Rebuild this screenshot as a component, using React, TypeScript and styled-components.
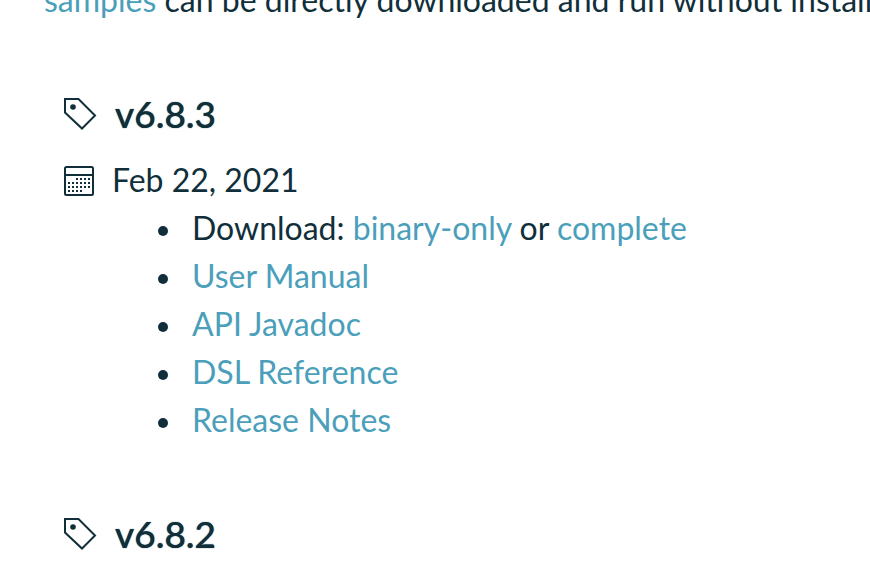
import React from "react";
import styled, { createGlobalStyle } from "styled-components";

const Global = createGlobalStyle`
  * { box-sizing: border-box; }
  body {
    margin: 0;
    overflow: hidden;
    background: #ffffff;
    color: #102f3a;
    font-family: Lato, sans-serif;
    font-size: 32px;
    line-height: 48px;
  }
`;

const Page = styled.main`
  padding-left: 44px;
`;

const Intro = styled.p`
  margin: -24px 0 0;
  white-space: nowrap;
`;

const Link = styled.a`
  color: #4b9fba;
  text-decoration: none;
`;

const Release = styled.section`
  padding: 66px 0 0 20px;
`;

const Version = styled.h2`
  display: flex;
  align-items: center;
  gap: 18px;
  margin: 0;
  font-size: 37px;
  font-weight: 500;
  line-height: 48px;
  text-shadow: 0 0 1px currentColor;
`;

const ReleaseDate = styled.div`
  display: flex;
  align-items: center;
  gap: 18px;
  margin-top: 18px;
`;

const Links = styled.ul`
  margin: 0;
  padding-left: 128px;
  list-style: none;
`;

const LinkRow = styled.li`
  &::before {
    content: "";
    display: inline-block;
    width: 10px;
    height: 10px;
    margin: 0 24px 0 -34px;
    border-radius: 50%;
    background: currentColor;
    vertical-align: 4px;
  }
`;

const Icon = styled.svg`
  flex: none;
  fill: none;
  stroke: currentColor;
  stroke-width: 2;
`;

const TagIcon = () => (
  <Icon width="33" height="32" viewBox="0 0 33 32" aria-hidden="true">
    <path d="M1 1H14.5L31 17.5L18 30.5L1 14.5Z" />
    <circle cx="9" cy="9" r="2.8" fill="currentColor" stroke="none" />
  </Icon>
);

const dots = [
  [12, 16, 20, 24],
  [4, 8, 12, 16, 20, 24],
  [4, 8, 12, 16, 20, 24],
  [4, 8, 12, 16],
];

const CalendarIcon = () => (
  <Icon width="30" height="32" viewBox="0 -2 30 32" aria-hidden="true">
    <rect x="1" y="1" width="28" height="28" rx="1.5" />
    <path d="M1 9H29" />
    {dots.map((row, r) =>
      row.map((x) => (
        <rect key={`${r}-${x}`} x={x} y={12 + r * 4} width="2" height="2" fill="currentColor" stroke="none" />
      )),
    )}
  </Icon>
);

const resources = ["User Manual", "API Javadoc", "DSL Reference", "Release Notes"];

export default function App() {
  return (
    <>
      <Global />
      <Page>
        <Intro>
          <Link href="#samples">samples</Link> can be directly downloaded and run without installing
        </Intro>
        <Release>
          <Version><TagIcon />v6.8.3</Version>
          <ReleaseDate><CalendarIcon /><time dateTime="2021-02-22">Feb 22, 2021</time></ReleaseDate>
          <Links>
            <LinkRow>Download: <Link href="#binary">binary-only</Link> or <Link href="#complete">complete</Link></LinkRow>
            {resources.map((name) => (
              <LinkRow key={name}><Link href="#docs">{name}</Link></LinkRow>
            ))}
          </Links>
        </Release>
        <Release>
          <Version><TagIcon />v6.8.2</Version>
        </Release>
      </Page>
    </>
  );
}
